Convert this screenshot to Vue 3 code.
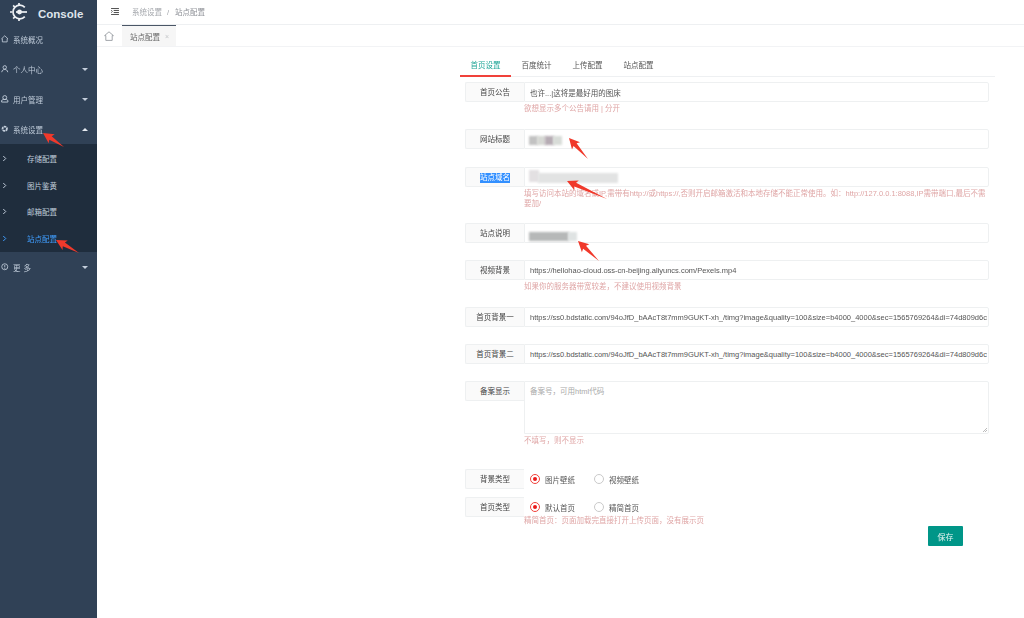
<script setup>
const subItems = [
  { label: '存储配置' },
  { label: '图片鉴黄' },
  { label: '邮箱配置' },
  { label: '站点配置', active: true }
]
const tabs = ['首页设置', '百度统计', '上传配置', '站点配置']
const bg = 'https://ss0.bdstatic.com/94oJfD_bAAcT8t7mm9GUKT-xh_/timg?image&quality=100&size=b4000_4000&sec=1565769264&di=74d809d6cf1a2b3c4d5e6f'

function arrow(tx, ty, ex, ey) {
  const dx = ex - tx, dy = ey - ty
  const len = Math.hypot(dx, dy)
  const ux = dx / len, uy = dy / len
  const nx = -uy, ny = ux
  const p = (a, b) => `${(tx + ux * a + nx * b).toFixed(1)},${(ty + uy * a + ny * b).toFixed(1)}`
  return [p(0, 0), p(10.5, 5.4), p(9, 2.1), p(len, 0), p(9, -2.1), p(10.5, -5.4)].join(' ')
}
const arrows = [
  arrow(43, 133, 64, 147),
  arrow(56, 240, 79, 253),
  arrow(569, 138, 588, 159),
  arrow(567, 181, 607, 199),
  arrow(578, 241, 599, 261)
]
</script>

<template>
  <div class="page">
    <aside class="sidebar">
      <div class="logo">
        <svg class="logo-mark" viewBox="0 0 18 18" fill="none" stroke="#eef1f5" stroke-width="1.7">
          <path d="M14.8 4.4A6.8 6.8 0 1 0 14.8 13.6" />
          <path d="M9 0V2.6M3.2 2.4L4.8 4.2M0 9H2.2M3.2 15.6L4.8 13.8M9 15.4V18" />
          <path d="M6 9H17" />
          <circle cx="9.5" cy="9" r="1.6" fill="#eef1f5" />
        </svg>
        <span class="logo-text">Console</span>
      </div>
      <div class="menu-item">
        <svg class="mi" viewBox="0 0 10 10" fill="none" stroke="#c4cfdc" stroke-width="1.1"><path d="M0.8 5L5 1L9.2 5L8.2 5V9.2H1.8V5Z" /></svg>
        <span>系统概况</span>
      </div>
      <div class="menu-item">
        <svg class="mi" viewBox="0 0 10 10" fill="none" stroke="#c4cfdc" stroke-width="1.2"><circle cx="5" cy="3.2" r="2.3" /><path d="M1 9.6C1.4 6.8 3 6 5 6S8.6 6.8 9 9.6" /></svg>
        <span>个人中心</span><i class="caret"></i>
      </div>
      <div class="menu-item">
        <svg class="mi" viewBox="0 0 10 10" fill="none" stroke="#c4cfdc" stroke-width="1.2"><circle cx="5" cy="3.4" r="2.6" /><path d="M0.8 9.4V7.2L3 6H7L9.2 7.2V9.4Z" /></svg>
        <span>用户管理</span><i class="caret"></i>
      </div>
      <div class="menu-item">
        <svg class="mi" viewBox="0 0 10 10" fill="none" stroke="#c4cfdc" stroke-width="2.4"><circle cx="5" cy="5" r="2.9" stroke-dasharray="3 0.7" /></svg>
        <span>系统设置</span><i class="caret up"></i>
      </div>
      <div class="submenu">
        <div v-for="s in subItems" :key="s.label" class="sub-item" :class="{ active: s.active }">
          <svg class="chev" viewBox="0 0 6 8" fill="none" stroke="currentColor" stroke-width="1.2"><path d="M1.5 1L4.5 4L1.5 7" /></svg>
          <span>{{ s.label }}</span>
        </div>
      </div>
      <div class="menu-item">
        <svg class="mi" viewBox="0 0 10 10" fill="none" stroke="#c4cfdc" stroke-width="1.1"><circle cx="5" cy="5" r="4" /><path d="M5 2.6V5.8M5 6.6V7.8" /></svg>
        <span class="spaced">更多</span><i class="caret"></i>
      </div>
    </aside>

    <div class="content">
      <header class="topbar">
        <svg class="hamburger" viewBox="0 0 9 8" fill="none" stroke="#444" stroke-width="1.1"><path d="M0 0.5H9M3 2.8H9M3 5.2H9M0 7.5H9" /><path d="M0 2.4L1.6 3.9L0 5.4" stroke-width="0.9" /></svg>
        <span class="crumb">系统设置</span>
        <span class="crumb-sep">/</span>
        <span class="crumb">站点配置</span>
      </header>

      <div class="tagbar">
        <svg class="home" viewBox="0 0 10 10" fill="none" stroke="#8a8f96" stroke-width="0.8"><path d="M0.6 4.6L5 0.8L9.4 4.6L8.2 4.6V9.4H1.8V4.6Z" /></svg>
        <div class="tag">
          <span>站点配置</span>
          <span class="tag-x">×</span>
        </div>
      </div>

      <main class="main">
        <div class="panel">
          <nav class="tabs">
            <span v-for="(t, i) in tabs" :key="t" class="tab" :class="{ on: i === 0 }">{{ t }}</span>
          </nav>

          <form class="form" @submit.prevent>
            <div class="field">
              <div class="row"><label class="lab">首页公告</label><input class="inp" value="也许...|这将是最好用的图床" /></div>
              <p class="help">欲想显示多个公告请用 | 分开</p>
            </div>
            <div class="field wide">
              <div class="row">
                <label class="lab">网站标题</label>
                <div class="inp masked">
                  <i class="m m1"></i><i class="m m2"></i><i class="m m3"></i><i class="m m4"></i>
                </div>
              </div>
            </div>
            <div class="field tight">
              <div class="row">
                <label class="lab"><span class="sel">站点域名</span></label>
                <div class="inp masked"><i class="d1"></i><i class="d2"></i></div>
              </div>
              <p class="help">填写访问本站的域名或IP,需带有http://或https://,否则开启邮箱激活和本地存储不能正常使用。如：http://127.0.0.1:8088,IP需带端口,最后不需要加/</p>
            </div>
            <div class="field">
              <div class="row">
                <label class="lab">站点说明</label>
                <div class="inp masked"><i class="s1"></i><i class="s2"></i></div>
              </div>
            </div>
            <div class="field narrow">
              <div class="row"><label class="lab">视频背景</label><input class="inp" value="https://hellohao-cloud.oss-cn-beijing.aliyuncs.com/Pexels.mp4" /></div>
              <p class="help">如果你的服务器带宽较差，不建议使用视频背景</p>
            </div>
            <div class="field">
              <div class="row"><label class="lab">首页背景一</label><input class="inp" :value="bg" /></div>
            </div>
            <div class="field">
              <div class="row"><label class="lab">首页背景二</label><input class="inp" :value="bg" /></div>
            </div>
            <div class="field area">
              <div class="row top">
                <label class="lab">备案显示</label>
                <textarea class="inp ta" placeholder="备案号，可用html代码"></textarea>
              </div>
              <p class="help">不填写，则不显示</p>
            </div>
            <div class="field radios">
              <div class="row">
                <label class="lab">背景类型</label>
                <span class="radio on"><i></i>图片壁纸</span>
                <span class="radio"><i></i>视频壁纸</span>
              </div>
            </div>
            <div class="field last">
              <div class="row">
                <label class="lab">首页类型</label>
                <span class="radio on"><i></i>默认首页</span>
                <span class="radio"><i></i>精简首页</span>
              </div>
              <p class="help flush">精简首页：页面加载完直接打开上传页面，没有展示页</p>
            </div>
            <div class="actions"><button class="save" type="button">保存</button></div>
          </form>
        </div>
      </main>
    </div>

    <svg class="arrows" viewBox="0 0 1024 618">
      <polygon v-for="(a, i) in arrows" :key="i" :points="a" fill="#f0392b" />
    </svg>
  </div>
</template>

<style>
html, body { margin: 0; background: #fff; }
</style>

<style scoped>
.page {
  position: relative;
  display: flex;
  width: 1024px;
  height: 618px;
  overflow: hidden;
  font-family: "Liberation Sans", "Noto Sans CJK SC", sans-serif;
  font-size: 7.5px;
  color: #555;
  filter: blur(0.3px);
}
.sidebar {
  width: 97px;
  flex: none;
  background: #304156;
  color: #bfcbd9;
}
.logo {
  height: 24px;
  display: flex;
  align-items: center;
  padding-left: 10px;
  box-sizing: border-box;
}
.logo-mark { width: 18px; height: 18px; flex: none; }
.logo-text {
  margin-left: 10px;
  margin-top: 4px;
  font-size: 11.5px;
  font-weight: 700;
  color: #dfe5ec;
}
.menu-item {
  position: relative;
  height: 30px;
  display: flex;
  align-items: center;
  padding-left: 1px;
  box-sizing: border-box;
}
.mi { width: 7.5px; height: 7.5px; margin-right: 4.5px; flex: none; }
.spaced { letter-spacing: 3px; }
.caret {
  position: absolute;
  left: 82px;
  top: 14px;
  border-left: 3px solid transparent;
  border-right: 3px solid transparent;
  border-top: 3px solid #c4cedb;
}
.caret.up { border-top: 0; border-bottom: 3px solid #e6ebf1; }
.submenu { background: #1f2d3d; height: 108px; box-sizing: border-box; padding-top: 1px; }
.sub-item {
  height: 26.75px;
  display: flex;
  align-items: center;
  padding-left: 2px;
}
.sub-item span { margin-left: 20px; }
.chev { width: 5px; height: 7px; flex: none; }
.sub-item.active { color: #409eff; }

.content { flex: 1; min-width: 0; display: flex; flex-direction: column; }
.topbar {
  height: 25px;
  flex: none;
  box-sizing: border-box;
  display: flex;
  align-items: center;
  border-bottom: 1px solid #eef0f2;
  padding-left: 14px;
  color: #a3a6ab;
}
.hamburger { width: 8px; height: 7px; margin-right: 13px; margin-top: -2px; }
.crumb { line-height: 10px; margin-top: 1px; }
.crumb + .crumb-sep { margin: 0 6px 0 5px; }
.crumb-sep + .crumb { color: #8d9096; }
.tagbar {
  height: 22px;
  flex: none;
  box-sizing: border-box;
  display: flex;
  padding-left: 7px;
  border-bottom: 1px solid #f2f3f5;
}
.home { width: 10px; height: 10px; margin-top: 6px; margin-right: 8px; }
.tag {
  width: 54px;
  box-sizing: border-box;
  border-top: 1px solid #4a5666;
  background: #f6f6f6;
  display: flex;
  align-items: center;
  padding-left: 8px;
  color: #666;
}
.tag-x { margin-left: 5px; color: #c4c6c9; font-size: 7px; }

.main { flex: 1; display: flex; padding-left: 363px; }
.panel { width: 535px; }
.tabs {
  margin-top: 8px;
  height: 22px;
  box-sizing: border-box;
  display: flex;
  border-bottom: 1px solid #eef0f2;
}
.tab {
  width: 51px;
  height: 22px;
  box-sizing: border-box;
  text-align: center;
  line-height: 21px;
  color: #555;
}
.tab.on { color: #1fa597; border-bottom: 2px solid #f0413a; }

.form { margin-left: 5px; width: 524px; padding-top: 5px; }
.field { margin-bottom: 17px; }
.field.wide { margin-bottom: 18px; }
.field.tight { margin-bottom: 14px; }
.field.narrow, .field:first-child { margin-bottom: 15px; }
.field.area { margin-bottom: 23px; }
.field.radios { margin-bottom: 8px; }
.field.last { margin-bottom: 0; }
.row { display: flex; height: 20px; }
.row.top { height: 53px; align-items: flex-start; }
.lab {
  width: 59px;
  height: 20px;
  flex: none;
  box-sizing: border-box;
  background: #fafafa;
  border: 1px solid #eef0f1;
  border-right: 0;
  border-radius: 2px 0 0 2px;
  text-align: center;
  line-height: 20px;
  color: #444;
}
.sel { background: #3390ff; color: #fff; display: inline-block; line-height: 10px; vertical-align: middle; }
.inp {
  flex: 1;
  min-width: 0;
  width: 100%;
  height: 20px;
  box-sizing: border-box;
  margin: 0;
  border: 1px solid #eef0f1;
  border-radius: 0 2px 2px 0;
  background: #fff;
  padding: 0 1px 0 5px;
  font: inherit;
  font-size: 7.5px;
  color: #555;
  outline: none;
}
.ta { height: 53px; padding: 5px; line-height: 10px; resize: vertical; }
.ta::placeholder { color: #aaa; }
.ta::-webkit-resizer {
  background:
    linear-gradient(135deg, transparent 50%, #bbb 50%, #bbb 60%, transparent 60%, transparent 72%, #bbb 72%, #bbb 82%, transparent 82%)
    right 1px bottom 1px / 5px 5px no-repeat;
}
.masked { position: relative; }
.masked i { position: absolute; filter: blur(1px); }
.m { top: 6px; height: 9px; width: 9px; }
.m1 { left: 4px; background: #c2c2c2; }
.m2 { left: 12px; background: #d6d8d4; }
.m3 { left: 20px; background: #b6acb4; }
.m4 { left: 28px; background: #d8dcd8; }
.d1 { left: 4px; top: 2px; width: 10px; height: 12px; background: #e3e0e2; }
.d2 { left: 13px; top: 5px; width: 80px; height: 10px; background: #e2e3e3; }
.s1 { left: 4px; top: 8px; width: 40px; height: 9px; background: #b6b8b8; }
.s2 { left: 43px; top: 8px; width: 9px; height: 9px; background: #dfe3e3; }
.help {
  margin: 0;
  padding: 2px 0 0 59px;
  line-height: 10px;
  color: #dfa5a5;
}
.help.flush { padding-top: 0; margin-top: -1px; }
.radio {
  display: inline-flex;
  align-items: center;
  color: #555;
  margin-left: 6px;
  width: 58px;
}
.radio i {
  width: 10px;
  height: 10px;
  box-sizing: border-box;
  border: 1px solid #c9c9c9;
  border-radius: 50%;
  margin-right: 5px;
  flex: none;
  position: relative;
}
.radio.on i { border-color: #f0413a; }
.radio.on i::after {
  content: "";
  position: absolute;
  left: 2px;
  top: 2px;
  width: 4px;
  height: 4px;
  border-radius: 50%;
  background: #ea1a1a;
}
.actions { display: flex; justify-content: flex-end; padding-right: 26px; }
.save {
  width: 35px;
  height: 20px;
  border: 0;
  border-radius: 1px;
  padding: 0;
  background: #009688;
  color: #e8f5f3;
  font: inherit;
  font-size: 8px;
}
.arrows { position: absolute; left: 0; top: 0; width: 1024px; height: 618px; pointer-events: none; }
</style>
